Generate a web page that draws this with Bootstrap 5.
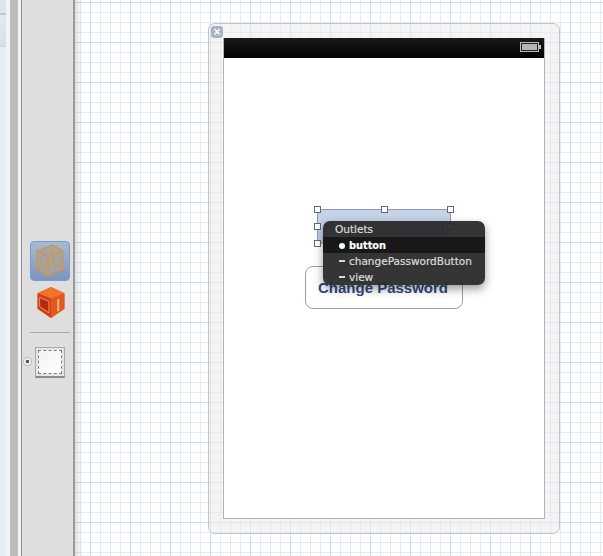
<!DOCTYPE html>
<html><head><meta charset="utf-8">
<link href="https://cdn.jsdelivr.net/npm/bootstrap@5.3.0/dist/css/bootstrap.min.css" rel="stylesheet">
<style>
html,body{margin:0;height:556px;overflow:hidden;}
body{font-family:"Liberation Sans",Arial,sans-serif;background:#fff;}
.stage{width:603px;height:556px;}
.edge{width:10px;background:#f4f4f4;}
.edge-a{width:6px;height:13px;background:#dde3ef;}
.edge-b{width:6px;height:2px;background:#c6c6c6;}
.edge-c{width:6px;height:31px;background:linear-gradient(#e2e8f3,#d7dfec);}
.edge-d{width:6px;height:1px;background:#c9ced6;}
.edge-e{width:6px;height:509px;background:#e9edf4;}
.gutter{width:8px;background:#bdbdbd;}
.sliver{background:#f3f3f3;border-right:1px solid #8f8f8f;width:4px;}
.rail{width:53px;background:#dedede;border-right:2px solid #9a9a9a;padding-top:241px;}
.cube-btn{width:40px;height:40px;margin-left:8px;border-radius:4px;border:1px solid #6f9fd8;background:linear-gradient(#a9b9d0,#7e95b9);}
.cube-red{margin:5px 0 0 14px;width:30px;height:33px;}
.rule{height:1px;background:#a8a8a8;width:40px;margin:13px 0 0 8px;}
.scene-row{margin-top:14px;}
.dot{width:9px;height:9px;margin:10px 3px 0 1px;border-radius:50%;background:radial-gradient(circle,#4d5a78 0 1.5px,#fbfbfb 2.2px);border:1px solid #b5b5b5;}
.scene-thumb{width:30px;height:31px;background:#e4e4e4;border:1px solid #a9a9a9;border-bottom:2px solid #8a8a8a;padding:2px;}
.scene-in{height:100%;background:linear-gradient(135deg,#f2f2f2,#fff);border:1px dashed #808080;}
.canvas{flex:1;min-width:0;position:relative;
background-color:#fff;
background-image:
linear-gradient(90deg,rgba(0,0,0,.12),rgba(0,0,0,0) 8px),
linear-gradient(90deg,#c6defb 1px,transparent 1px),
linear-gradient(#c6defb 1px,transparent 1px),
linear-gradient(90deg,#e0ecfd 1px,transparent 1px),
linear-gradient(#e0ecfd 1px,transparent 1px);
background-size:100% 100%,40px 40px,40px 40px,10px 10px,10px 10px;
background-position:0 0,15px 2px,15px 2px,5px 2px,5px 2px;
background-repeat:no-repeat,repeat,repeat,repeat,repeat;
}
.frame{position:absolute;left:133px;top:23px;width:352px;height:511px;background:rgba(235,235,235,.55);border:1px solid #c4c4c4;border-radius:7px;padding:14px;}
.close-x{position:absolute;left:2px;top:2px;width:12px;height:12px;border-radius:3px;background:#a9b3c4;color:#fff;font-size:12px;line-height:12px;text-align:center;font-weight:700;}
.phone{height:481px;background:#fff;border:1px solid #b2b2b2;border-top:0;}
.status{height:20px;background:linear-gradient(#1a1a1a,#000);padding:4px 3px 0 0;}
.batt{width:19px;height:10px;border:1px solid #bbb;background:#b5b5b5;box-shadow:inset 0 0 0 1px #222;}
.batt-tip{width:2px;height:4px;background:#bbb;}
.view-area{position:relative;height:460px;}
.sel-btn{position:absolute;left:93px;top:151px;width:134px;height:35px;background:#c5d2e8;border:1px solid #8d9ab4;border-radius:6px;}
.ghost-text{position:absolute;left:28px;top:9px;font-size:15px;font-weight:700;color:#a9b5ca;}
.handle{position:absolute;width:7px;height:7px;background:#fff;border:1px solid #6a6a6a;}
.pw-btn{position:absolute;left:81px;top:208px;width:158px;height:43px;padding-right:2px;background:#fff;border:1px solid #9e9e9e;border-radius:8px;text-align:center;color:#2f4a80;font-weight:700;font-size:15px;line-height:42px;}
.outlets{position:absolute;left:99px;top:163px;width:162px;height:64px;background:rgba(42,42,42,.95);border-radius:7px;box-shadow:0 4px 10px rgba(0,0,0,.4);color:#dcdcdc;font-size:10.5px;line-height:16px;font-family:"DejaVu Sans",sans-serif;-webkit-text-stroke:.2px currentColor;overflow:hidden;}
.out-head{padding-left:12px;height:16px;line-height:17px;}
.out-row{height:16px;display:flex;align-items:center;padding-left:16px;}
.out-row.on{background:#181818;color:#fff;font-weight:700;font-size:9.8px;padding-top:1px;}
.mk{width:6px;height:6px;margin-right:4px;border-radius:50%;background:#fff;}
.mk.dash{height:2px;border-radius:0;background:#d8d8d8;}
</style></head>
<body>
<div class="stage d-flex">
  <div class="edge"><div class="edge-a"></div><div class="edge-b"></div><div class="edge-c"></div><div class="edge-d"></div><div class="edge-e"></div></div>
  <div class="gutter"></div>
  <div class="sliver"></div>
  <div class="rail">
    <div class="cube-btn">
      <svg class="d-block" width="38" height="38" viewBox="0 0 38 38"><path d="M6 9 L22 3 L32 9 L32 27 L17 34 L6 26 Z" fill="#a9a294" fill-opacity=".85"/><path d="M6 9 L22 3 L32 9 L32 27 L17 34 L6 26 Z M6 9 L17 15 L32 9 M17 15 L17 34 M6 26 L22 21 L32 27 M22 3 L22 21" fill="none" stroke="#cc9655" stroke-width="1.3"/></svg>
    </div>
    <div class="cube-red">
      <svg class="d-block" width="30" height="33" viewBox="0 0 28 32"><path d="M1 7 L14 1 L27 7 L27 22 L14 31 L1 22 Z" fill="#e2521c"/><path d="M1 7 L14 1 L27 7 L14 12 Z" fill="#ef7427"/><path d="M14 12 L27 7 L27 22 L14 31 Z" fill="#e05a1e"/><path d="M1 7 L14 12 L14 31 L1 22 Z" fill="#d23f16"/><path d="M3 11 L12 15 L12 26 L3 20 Z" fill="#b32a10" stroke="#f2a676" stroke-width=".8"/><path d="M20 13 L22 12 L22 24 L20 25 Z" fill="#f6b27c"/></svg>
    </div>
    <div class="rule"></div>
    <div class="scene-row d-flex">
      <div class="dot"></div>
      <div class="scene-thumb"><div class="scene-in"></div></div>
    </div>
  </div>
  <div class="canvas">
    <div class="frame">
      <div class="close-x">×</div>
      <div class="phone">
        <div class="status d-flex justify-content-end">
          <div class="d-flex align-items-center" style="height:10px"><div class="batt"></div><div class="batt-tip"></div></div>
        </div>
        <div class="view-area">
          <div class="sel-btn"><span class="ghost-text">Disconnected</span></div>
          <div class="handle" style="left:90px;top:148px"></div>
          <div class="handle" style="left:157px;top:148px"></div>
          <div class="handle" style="left:223px;top:148px"></div>
          <div class="handle" style="left:90px;top:165px"></div>
          <div class="handle" style="left:90px;top:182px"></div>
          <div class="handle" style="left:223px;top:165px"></div>
          <div class="handle" style="left:223px;top:182px"></div>
          <div class="pw-btn">Change Password</div>
          <div class="outlets">
            <div class="out-head">Outlets</div>
            <div class="out-row on"><span class="mk"></span><span>button</span></div>
            <div class="out-row"><span class="mk dash"></span><span>changePasswordButton</span></div>
            <div class="out-row"><span class="mk dash"></span><span>view</span></div>
          </div>
        </div>
      </div>
    </div>
  </div>
</div>
<script src="https://cdn.jsdelivr.net/npm/bootstrap@5.3.0/dist/js/bootstrap.bundle.min.js"></script>
</body></html>
